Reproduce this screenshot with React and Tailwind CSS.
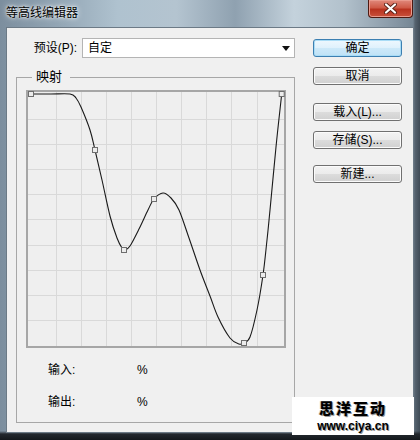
import React from "react";

// sample points of the contour curve, in the graph's own coordinates
const curve = [
  [5, 4], [25, 4], [44, 4], [50, 8], [55, 17], [64, 40], [69, 60], [76, 90],
  [84, 126], [91, 148], [96, 158], [99, 160], [104, 156], [113, 139], [122, 120],
  [128, 109], [137, 103], [145, 108], [153, 120], [163, 148], [174, 180],
  [184, 206], [192, 227], [204, 248], [213, 254], [218, 253], [224, 247],
  [231, 220], [237, 185], [241, 150], [244, 120], [250, 57], [255.7, 4],
];

const handles = [[5, 4], [69, 60], [98, 160], [128, 109], [218, 253], [237, 185], [255.7, 4]];

function smooth(p) {
  let d = `M${p[0][0]},${p[0][1]}`;
  for (let i = 0; i < p.length - 1; i++) {
    const p0 = p[i - 1] || p[i];
    const p1 = p[i];
    const p2 = p[i + 1];
    const p3 = p[i + 2] || p2;
    const c1x = p1[0] + (p2[0] - p0[0]) / 6;
    const c1y = p1[1] + (p2[1] - p0[1]) / 6;
    const c2x = p2[0] - (p3[0] - p1[0]) / 6;
    const c2y = p2[1] - (p3[1] - p1[1]) / 6;
    d += ` C${c1x.toFixed(1)},${c1y.toFixed(1)} ${c2x.toFixed(1)},${c2y.toFixed(1)} ${p2[0]},${p2[1]}`;
  }
  return d;
}

function Graph() {
  const ticks = [1, 2, 3, 4, 5, 6, 7, 8, 9];
  return (
    <svg width="260" height="258" className="block">
      <rect x="0" y="0" width="260" height="258" fill="#efefef" />
      {ticks.map((k) => {
        const x = Math.round(4.6 + 25.1 * k) + 0.5;
        const y = Math.round(3.9 + 25.1 * k) + 0.5;
        return (
          <g key={k} stroke="#d9d9d9" strokeWidth="1" shapeRendering="crispEdges">
            <line x1={x} y1="2" x2={x} y2="256" />
            <line x1="2" y1={y} x2="258" y2={y} />
          </g>
        );
      })}
      <rect x="1" y="1" width="258" height="256" fill="none" stroke="#a6a6a6" strokeWidth="2" />
      <path d={smooth(curve)} fill="none" stroke="#1a1a1a" strokeWidth="1.1" />
      {handles.map(([x, y], i) => (
        <rect key={i} x={x - 2.5} y={y - 2.5} width="5" height="5" fill="#ececec" stroke="#6e6e6e" strokeWidth="1" />
      ))}
    </svg>
  );
}

function Btn({ children, primary, className = "" }) {
  return (
    <button
      className={`h-[18px] w-[89px] rounded-[3px] border text-[12px] leading-none text-black ${
        primary
          ? "border-[#3c7fb1] bg-[linear-gradient(#eef8fe,#dff1fc_50%,#cde9f9_50%,#bfe2f6)] shadow-[inset_0_0_0_1px_#a9dcf6]"
          : "border-[#707070] bg-[linear-gradient(#f3f3f3,#ebebeb_50%,#dcdcdc_50%,#d0d0d0)] shadow-[inset_0_0_0_1px_#fbfbfb]"
      } ${className}`}
    >
      {children}
    </button>
  );
}

export default function App() {
  return (
    <div className="relative w-[420px] h-[440px] overflow-hidden flex flex-col font-['Liberation_Sans','Noto_Sans_CJK_SC',sans-serif] bg-[linear-gradient(to_bottom,transparent_0,transparent_431px,#23282e_434px,#14181c),linear-gradient(to_right,transparent_0,transparent_413px,#56636f_415px,#3f4b56),linear-gradient(to_right,#7c8e9e,#93a6b5_14%,#afc2cf_28%,#b4c4d0_42%,#8fa1b0_56%,#c4d2dc_70%,#b2c1cc_82%,#8797a5_94%,#6f808e)]">
      {/* title bar */}
      <div className="h-[27px] flex items-start justify-between">
        <span className="pl-[6px] pt-[5px] text-[12px] leading-[16px] text-black [text-shadow:0_0_6px_#ffffff,0_0_3px_#ffffff]">
          等高线编辑器
        </span>
        <div className="mr-[7px] w-[45px] h-[18px] rounded-b-[4px] border border-t-0 border-[#4e1a12] bg-[linear-gradient(#e0897c,#cf5a47_45%,#b8321f_55%,#c9513c)] shadow-[inset_0_0_0_1px_#e99a8d] flex items-center justify-center">
          <svg width="13" height="11" viewBox="0 0 13 11">
            <path d="M2 1.5 L11 9.5 M11 1.5 L2 9.5" stroke="#5a2017" strokeWidth="4" strokeLinecap="round" />
            <path d="M2 1.5 L11 9.5 M11 1.5 L2 9.5" stroke="#ffffff" strokeWidth="2.2" strokeLinecap="round" />
          </svg>
        </div>
      </div>

      {/* client area */}
      <div className="flex-1 mx-[6px] mb-[7px] flex border border-[#6c7a86] bg-[#f0f0f0] text-[12px] text-black">
        <div className="ml-[9px] w-[279px] pt-[10px] flex flex-col">
          <div className="h-[20px] flex items-center">
            <span className="w-[66px] pr-[5px] text-right leading-[16px]">预设(P):</span>
            <div className="w-[213px] h-[20px] bg-white border border-[#b4b4b4] flex items-center justify-between pl-[5px] pr-[4px]">
              <span className="leading-[16px]">自定</span>
              <svg width="8" height="5" viewBox="0 0 8 5">
                <path d="M0 0 H8 L4 5 Z" fill="#111" />
              </svg>
            </div>
          </div>

          <fieldset className="mt-[11px] h-[354px] border border-[#a7a7a7]">
            <legend className="ml-[15px] pl-[4px] pr-[8px] text-[13px] leading-[16px]">映射</legend>
            <div className="mt-[5px] ml-[9px]">
              <Graph />
            </div>
            <div className="mt-[14px] ml-[31px] flex h-[16px] leading-[16px]">
              <span className="w-[89px]">输入:</span>
              <span>%</span>
            </div>
            <div className="mt-[16px] ml-[31px] flex h-[16px] leading-[16px]">
              <span className="w-[89px]">输出:</span>
              <span>%</span>
            </div>
          </fieldset>
        </div>

        <div className="ml-[18px] pt-[11px] flex flex-col">
          <Btn primary>确定</Btn>
          <Btn className="mt-[10px]">取消</Btn>
          <Btn className="mt-[18px]">载入(L)...</Btn>
          <Btn className="mt-[10px]">存储(S)...</Btn>
          <Btn className="mt-[16px]">新建...</Btn>
        </div>
      </div>

      {/* site stamp in the corner */}
      <div className="absolute left-[292px] top-[397px] w-[122px] h-[38px] bg-white flex flex-col items-center pt-[3px]">
        <span className="text-[15px] leading-[15px] font-black tracking-[2px] text-black font-['Noto_Sans_CJK_SC',sans-serif] [text-shadow:1px_1px_0_#9a9a9a,-1px_0_0_#c8c8c8]">
          思洋互动
        </span>
        <span className="mt-[5px] text-[12px] leading-[12px] font-bold text-black [text-shadow:1px_1px_0_#9a9a9a]">
          www.ciya.cn
        </span>
      </div>
    </div>
  );
}
